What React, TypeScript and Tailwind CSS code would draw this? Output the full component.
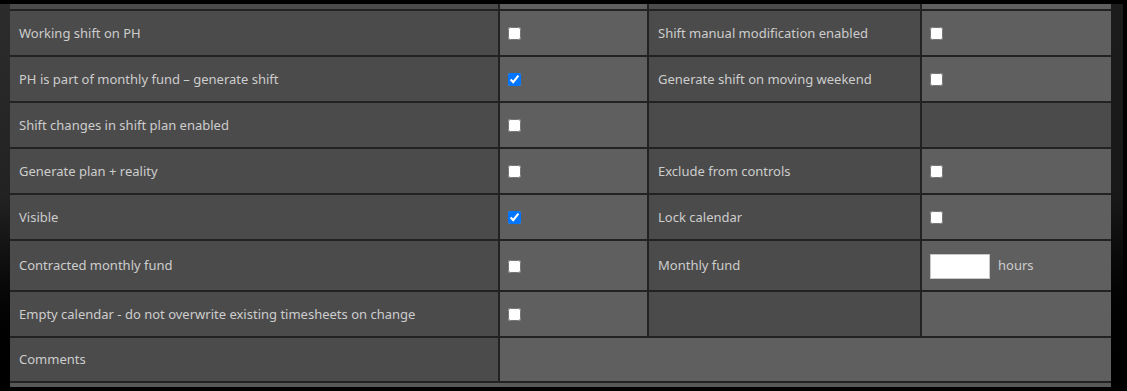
import React from 'react';

type Row = {
  label: string;
  checked?: boolean;
  right?: { label: string; checked?: boolean; hours?: boolean } | null;
  emptyRightLight?: boolean;
};

const rows: Row[] = [
  { label: 'Working shift on PH', right: { label: 'Shift manual modification enabled' } },
  { label: 'PH is part of monthly fund – generate shift', checked: true, right: { label: 'Generate shift on moving weekend' } },
  { label: 'Shift changes in shift plan enabled', right: null },
  { label: 'Generate plan + reality', right: { label: 'Exclude from controls' } },
  { label: 'Visible', checked: true, right: { label: 'Lock calendar' } },
  { label: 'Contracted monthly fund', right: { label: 'Monthly fund', hours: true } },
  { label: 'Empty calendar - do not overwrite existing timesheets on change', right: null, emptyRightLight: true },
];

const labelCell = 'bg-[#4b4b4b] flex items-center px-[9px] pt-[1px] text-[13px] text-[#cdcdcd]';
const valueCell = 'bg-[#5f5f5f] flex items-center px-[8px] pt-[1px] text-[13px] text-[#cdcdcd]';

function Check({ checked }: { checked?: boolean }) {
  return (
    <input
      type="checkbox"
      defaultChecked={checked}
      className="m-0 h-[13px] w-[13px]"
    />
  );
}

export default function App() {
  return (
    <div
      className="flex h-[391px] w-[1127px] bg-black pt-[4px]"
      style={{ fontFamily: '"Noto Sans", "Open Sans", sans-serif' }}
    >
      <div className="w-[10px] h-full bg-gradient-to-b from-[#2c2c2c] via-[#222] to-black" />
      <div className="grid grid-cols-[488px_147px_271px_189px] grid-rows-[5px_44px_44px_44px_44px_44px_49px_44px_43px_4px] gap-[2px] bg-[#222] self-start">
        <div className="bg-[#4b4b4b]" />
        <div className="bg-[#5f5f5f]" />
        <div className="bg-[#4b4b4b]" />
        <div className="bg-[#5f5f5f]" />

        {rows.map((r, i) => (
          <React.Fragment key={i}>
            <div className={labelCell}>{r.label}</div>
            <div className={valueCell}>
              <Check checked={r.checked} />
            </div>
            {r.right ? (
              <>
                <div className={labelCell}>{r.right.label}</div>
                <div className={valueCell + ' gap-[8px]'}>
                  {r.right.hours ? (
                    <>
                      <input
                        type="text"
                        className="h-[25px] w-[60px] border border-[#c8c8c8] bg-white px-1 text-[13px] text-black outline-none"
                      />
                      <span>hours</span>
                    </>
                  ) : (
                    <Check checked={r.right.checked} />
                  )}
                </div>
              </>
            ) : (
              <>
                <div className="bg-[#4b4b4b]" />
                <div className={r.emptyRightLight ? 'bg-[#5f5f5f]' : 'bg-[#4b4b4b]'} />
              </>
            )}
          </React.Fragment>
        ))}

        <div className={labelCell}>Comments</div>
        <div className="col-span-3 bg-[#5f5f5f]" />

        <div className="col-span-4 bg-[#585858]" />
      </div>
      <div className="w-[12px] h-full bg-gradient-to-b from-[#1c1c1c] via-[#181818] to-black" />
    </div>
  );
}
